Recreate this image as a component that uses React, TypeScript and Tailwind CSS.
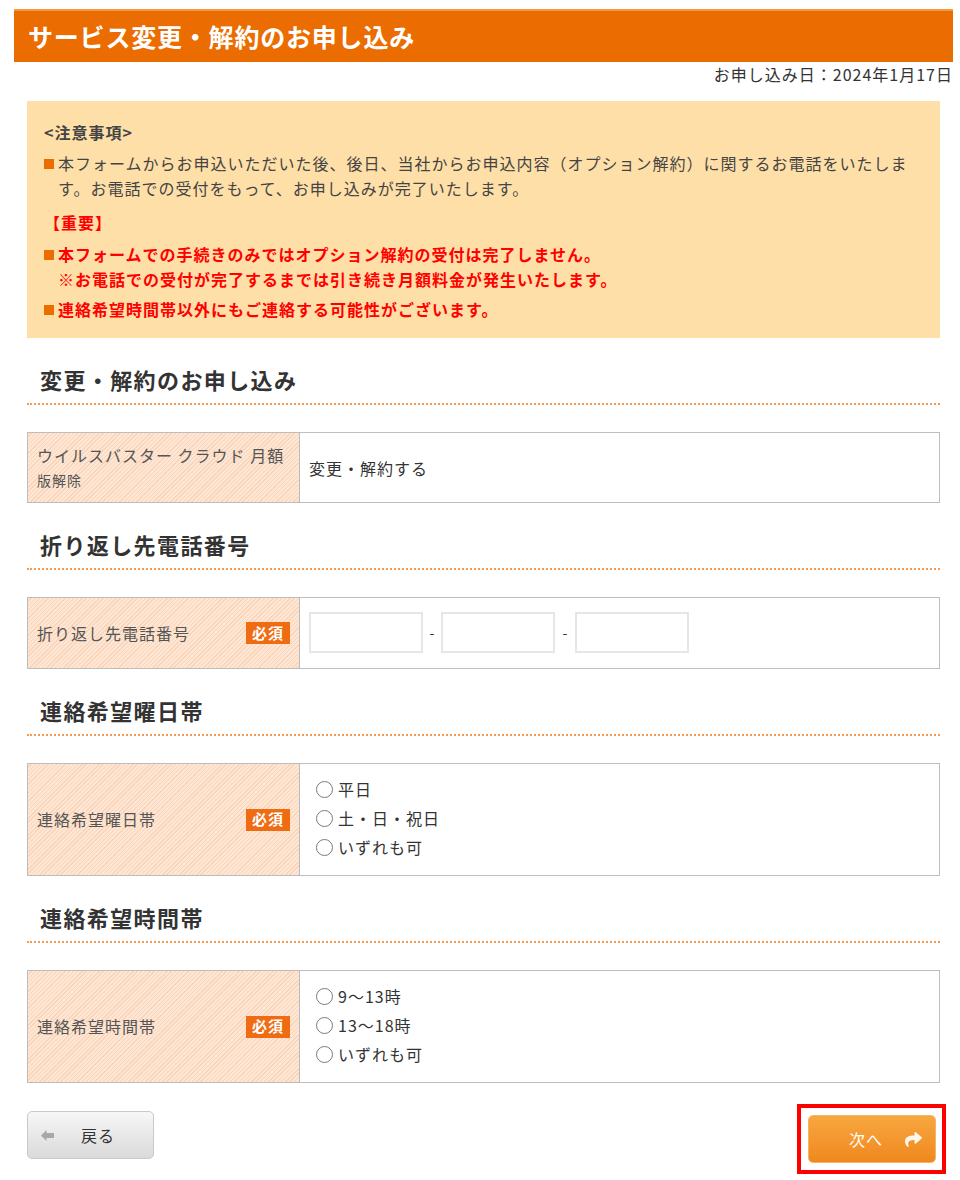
import { ReactNode } from 'react';
import { FaShare } from 'react-icons/fa';

const stripe =
  'bg-[#fee6d3] bg-[image:repeating-linear-gradient(135deg,transparent_0px,transparent_2px,#f8d5ba_2px,#f8d5ba_3px)]';

function SectionTitle({ children }: { children: ReactNode }) {
  return (
    <div className="mt-[27px] border-b-2 border-dotted border-[#f39b55] pb-[9px] pl-[13px] text-[22px] font-bold leading-[29px] tracking-[1.4px] text-[#333]">
      {children}
    </div>
  );
}

function FormRow({
  label,
  required,
  children,
  valueClass,
}: {
  label: ReactNode;
  required?: boolean;
  children: ReactNode;
  valueClass: string;
}) {
  return (
    <div className="mt-[27px] flex border border-[#bdbdbd]">
      <div className={`flex w-[272px] shrink-0 items-center justify-between border-r border-[#bdbdbd] pl-[9px] pr-[9px] ${stripe}`}>
        <div className="text-[16px] leading-[25px] tracking-[1px] text-[#555]">{label}</div>
        {required && (
          <span className="flex h-[22px] w-[44px] items-center justify-center bg-[#ef6c12] text-[15px] font-bold tracking-[1px] text-white">
            必須
          </span>
        )}
      </div>
      <div className={`flex-1 ${valueClass}`}>{children}</div>
    </div>
  );
}

function Radio({ label }: { label: string }) {
  return (
    <label className="flex items-center gap-[5px] text-[16px] leading-[29px] tracking-[1px] text-[#333]">
      <span className="h-[17px] w-[17px] shrink-0 rounded-full border-[1.5px] border-[#7a7a7a] bg-white" />
      {label}
    </label>
  );
}

function Bullet({ children, className }: { children: ReactNode; className: string }) {
  return (
    <div className={`flex ${className}`}>
      <span className="mr-[4px] ml-[6px] mt-[8px] h-[10px] w-[10px] shrink-0 bg-[#eb6d00]" />
      <div>{children}</div>
    </div>
  );
}

export default function App() {
  return (
    <div className="min-h-[1180px] bg-white pl-[14px] pt-[9px] font-['Noto_Sans_CJK_JP',sans-serif]">
      <div className="w-[939px]">
        <div className="flex h-[53px] items-center border-t-2 border-[#f49a3a] bg-[#eb6c00] pl-[14px] text-[25px] font-bold tracking-[0.8px] text-white">
          サービス変更・解約のお申し込み
        </div>
        <div className="text-right text-[16px] leading-[24px] tracking-[1px] text-[#333]">
          お申し込み日：2024年1月17日
        </div>

        <div className="mx-[13px]">
          <div className="mt-[15px] bg-[#fedfa8] pb-[16px] pl-[11px] pr-[14px] pt-[19px] text-[16px] leading-[25px] tracking-[1px] text-[#444]">
            <div className="pl-[6px] font-bold">&lt;注意事項&gt;</div>
            <Bullet className="mt-[6px]">
              本フォームからお申込いただいた後、後日、当社からお申込内容（オプション解約）に関するお電話をいたしま
              <br />
              す。お電話での受付をもって、お申し込みが完了いたします。
            </Bullet>
            <div className="mt-[9px] pl-[6px] font-bold text-[#ff0000]">【重要】</div>
            <Bullet className="mt-[7px] font-bold text-[#ff0000]">
              本フォームでの手続きのみではオプション解約の受付は完了しません。
              <br />
              ※お電話での受付が完了するまでは引き続き月額料金が発生いたします。
            </Bullet>
            <Bullet className="mt-[5px] font-bold text-[#ff0000]">連絡希望時間帯以外にもご連絡する可能性がございます。</Bullet>
          </div>

          <SectionTitle>変更・解約のお申し込み</SectionTitle>
          <FormRow
            label={
              <div className="pt-[10px] pb-[9px]">
                <div>ウイルスバスター クラウド 月額</div>
                <div className="text-[14px]">版解除</div>
              </div>
            }
            valueClass="flex items-center pl-[9px] text-[16px] tracking-[1px] text-[#333]"
          >
            変更・解約する
          </FormRow>

          <SectionTitle>折り返し先電話番号</SectionTitle>
          <FormRow label="折り返し先電話番号" required valueClass="flex items-center pt-[14px] pb-[15px] pl-[9px]">
            <input className="h-[41px] w-[114px] border-2 border-[#e6e6e6] bg-white outline-none" />
            <span className="w-[18px] text-center text-[14px] text-[#333]">-</span>
            <input className="h-[41px] w-[114px] border-2 border-[#e6e6e6] bg-white outline-none" />
            <span className="w-[20px] text-center text-[14px] text-[#333]">-</span>
            <input className="h-[41px] w-[114px] border-2 border-[#e6e6e6] bg-white outline-none" />
          </FormRow>

          <SectionTitle>連絡希望曜日帯</SectionTitle>
          <FormRow label="連絡希望曜日帯" required valueClass="pl-[16px] pt-[11px] pb-[13px]">
            <Radio label="平日" />
            <Radio label="土・日・祝日" />
            <Radio label="いずれも可" />
          </FormRow>

          <SectionTitle>連絡希望時間帯</SectionTitle>
          <FormRow label="連絡希望時間帯" required valueClass="pl-[16px] pt-[11px] pb-[13px]">
            <Radio label="9～13時" />
            <Radio label="13～18時" />
            <Radio label="いずれも可" />
          </FormRow>

          <div className="mt-[21px] -mr-[6px] flex items-start justify-between">
            <button className="mt-[7px] flex h-[48px] w-[127px] items-center rounded-[5px] border border-[#c9c9c9] bg-linear-to-b from-[#f7f7f7] to-[#dadada] pl-[13px] text-[16px] tracking-[1px] text-[#333]">
              <svg width="13" height="11" viewBox="0 0 13 11" className="text-[#a8a8a8]">
                <path d="M0 5.5 L5.5 0 L5.5 3 L13 3 L13 8 L5.5 8 L5.5 11 Z" fill="currentColor" />
              </svg>
              <span className="ml-[27px]">戻る</span>
            </button>
            <div className="border-4 border-[#ff0000] pb-[7px] pl-[7px] pr-[6px] pt-[7px]">
              <button className="flex h-[48px] w-[128px] items-center rounded-[5px] border border-[#f5b46a] bg-linear-to-b from-[#f8a73f] to-[#ef881c] pl-[40px] text-[16px] tracking-[1px] text-white">
                <span>次へ</span>
                <FaShare className="ml-[22px] h-[17px] w-[17px] text-[#fff6ec]" />
              </button>
            </div>
          </div>
        </div>
      </div>
    </div>
  );
}
